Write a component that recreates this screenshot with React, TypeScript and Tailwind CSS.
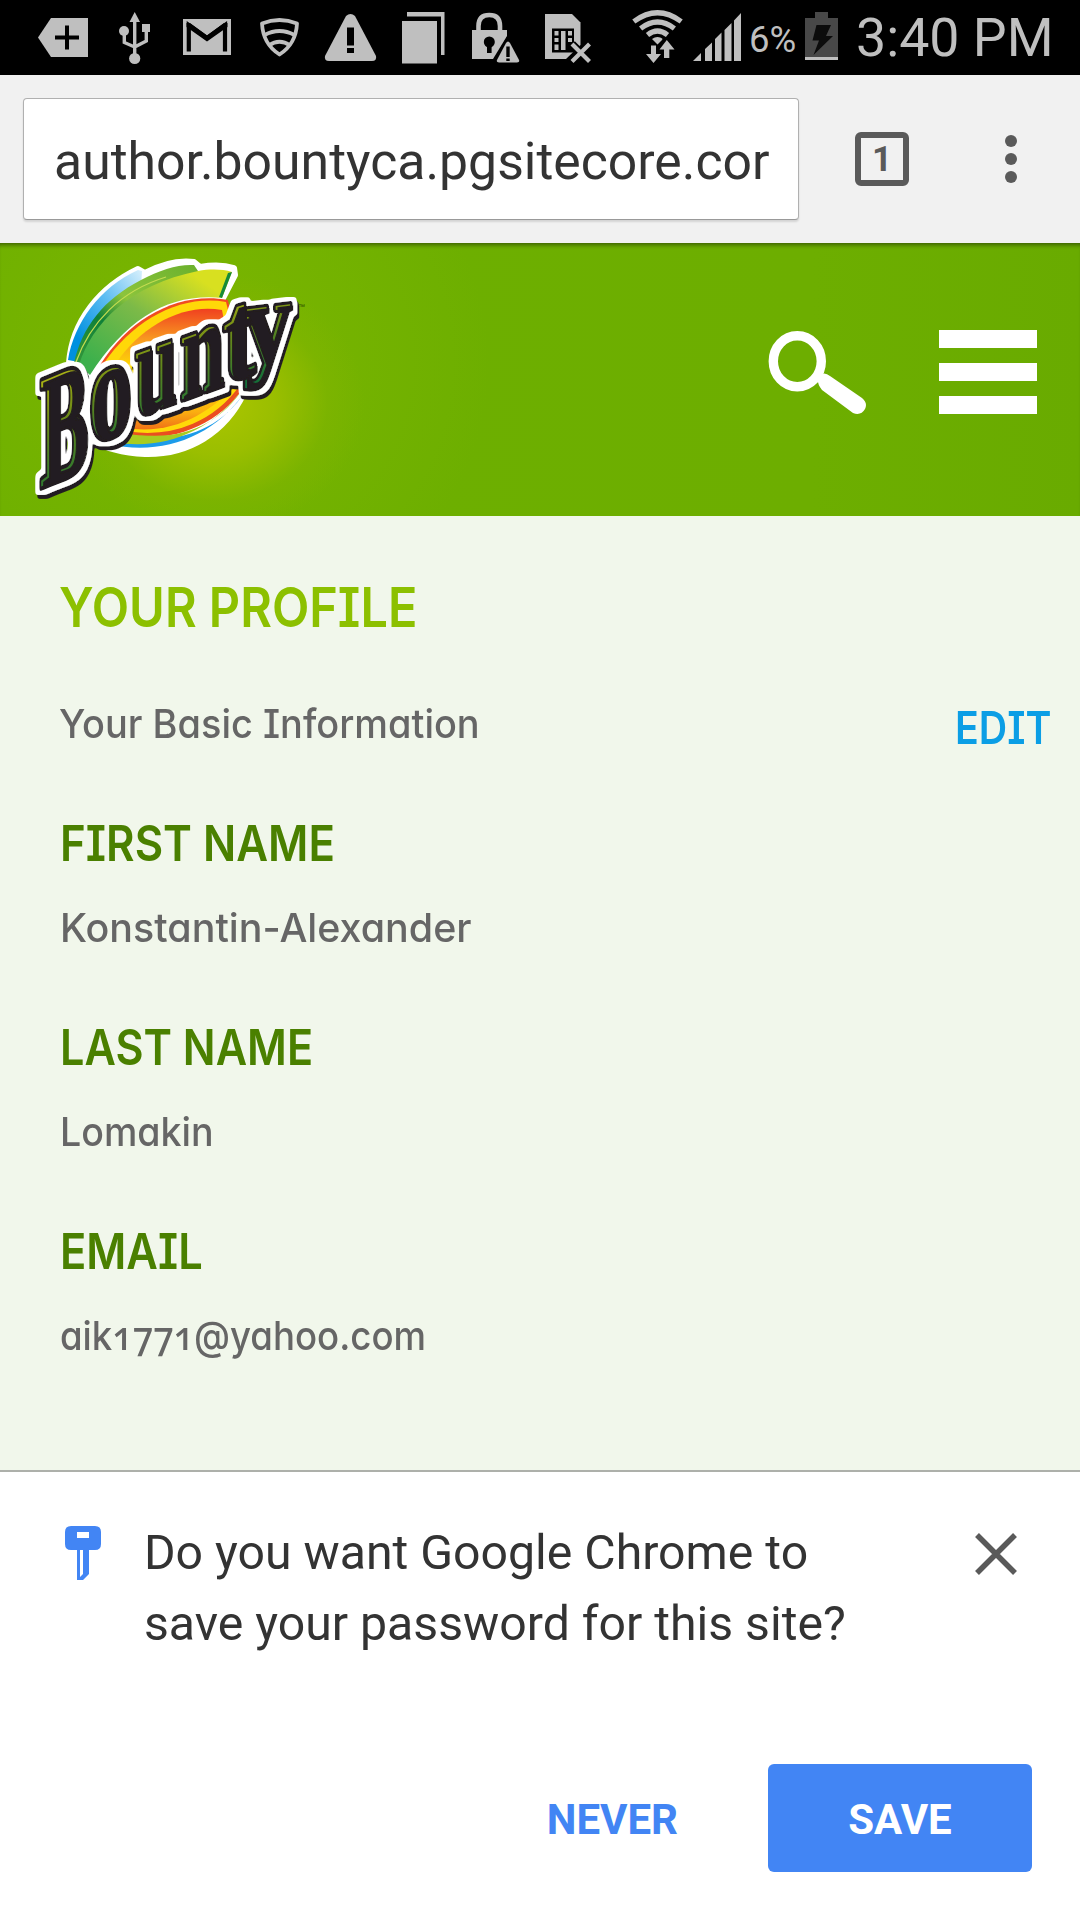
import React, { ReactNode, useLayoutEffect, useRef, useState } from 'react';

/* Text set on one line and condensed horizontally to a given width. */
function FitText({ width, className = '', children }: { width: number; className?: string; children: ReactNode }) {
  const ref = useRef<HTMLSpanElement>(null);
  const [scale, setScale] = useState(1);
  useLayoutEffect(() => {
    if (ref.current) setScale(width / ref.current.offsetWidth);
  }, [width]);
  return (
    <div className={className} style={{ width }}>
      <span ref={ref} className="inline-block origin-left whitespace-nowrap" style={{ transform: `scaleX(${scale})` }}>
        {children}
      </span>
    </div>
  );
}

/* One slot of the status bar; x is where its drawing begins on the bar. */
function Slot({ x, w, className, children }: { x: number; w: number; className: string; children: ReactNode }) {
  return (
    <svg viewBox={`${x} 0 ${w} 75`} className={`h-[75px] shrink-0 ${className}`} fill="#bfbfbf">
      {children}
    </svg>
  );
}

function StatusBar() {
  return (
    <header className="flex h-[75px] bg-black text-[#bfbfbf]">
      <Slot x={0} w={105} className="w-[105px]">
        <path d="M38 37.500 51 18H88V57H51Z" />
        <path d="M67 25.500V49.500M55 37.500H79" stroke="#000" strokeWidth="4" />
      </Slot>
      <Slot x={105} w={60} className="w-[60px]">
        <path d="M134.700 12 140 22H129.500Z" />
        <circle cx="124" cy="31" r="5" />
        <rect x="142" y="24" width="8" height="8" />
        <circle cx="134.700" cy="58.500" r="5.600" />
        <path d="M134.700 20V56M124.300 33V42.500L134.700 47M146.300 30V41L134.700 47" fill="none" stroke="#bfbfbf" strokeWidth="3.400" />
      </Slot>
      <Slot x={165} w={80} className="w-[80px]">
        <rect x="183" y="19" width="48" height="36" />
        <path d="M188.800 51.500V25L207 38L225 25V51.500" fill="none" stroke="#000" strokeWidth="4.200" />
        <path d="M186.500 23H190L207 35.500L224 23H227.500V27L207 41.500L186.500 27Z" fill="#000" />
      </Slot>
      <Slot x={245} w={67} className="w-[67px]">
        <g fill="none" stroke="#bfbfbf" strokeWidth="3.800" strokeLinejoin="round">
          <path d="M262 23.500Q279.500 16.500 297 23.500Q296 44 279.500 54.500Q263 44 262 23.500Z" />
          <path d="M264.500 35Q279.500 27 294.500 35M269 45.500Q279.500 38 290 45.500" />
        </g>
      </Slot>
      <Slot x={312} w={78} className="w-[78px]">
        <path d="M346 16Q350.500 12 355 16L376 56Q377 61 372 61H329Q324 61 325 56Z" />
        <path d="M347 27.500H354V45.500H347ZM347 48H354V53H347Z" fill="#000" />
      </Slot>
      <Slot x={390} w={68} className="w-[68px]">
        <rect x="402" y="21" width="35" height="42.500" />
        <path d="M407 12H444.500V55H441V16.500H407Z" />
      </Slot>
      <Slot x={458} w={72} className="w-[72px]">
        <path d="M472 30H507V36L493 59H472Z" />
        <path d="M478.500 31V26Q478.500 15 489.300 15Q500 15 500 26V31" fill="none" stroke="#bfbfbf" strokeWidth="4.600" />
        <circle cx="489.300" cy="42" r="5.500" fill="#000" />
        <rect x="487" y="43" width="4.600" height="10" fill="#000" />
        <path d="M508 39 521 63H494Z" stroke="#000" strokeWidth="4" />
        <path d="M506 43Q508 40 510 43L519 60Q520 62.500 517 62.500H499Q496 62.500 497 60Z" />
        <path d="M506.300 46.500H509.700V57H506.300ZM506.300 58.500H509.700V61H506.300Z" fill="#000" />
      </Slot>
      <Slot x={530} w={70} className="w-[70px]">
        <path d="M545 14H572L580.500 22.500V45L566 59H545Z" />
        <rect x="552" y="28.500" width="22" height="24" fill="#000" />
        <path d="M554.500 31H558.500V35.500H554.500ZM554.500 38H558.500V42H554.500ZM554.500 44.500H558.500V50H554.500ZM561 31H565.500V50H561ZM568 31H572V35.500H568ZM568 38H572V42H568Z" />
        <path d="M572 44 589.500 61.500M589.500 44 572 61.500" stroke="#000" strokeWidth="8" />
        <path d="M572 44 589.500 61.500M589.500 44 572 61.500" stroke="#bfbfbf" strokeWidth="4.200" />
      </Slot>
      <Slot x={600} w={90} className="w-[90px]">
        <g fill="none" stroke="#bfbfbf" strokeWidth="5.200">
          <path d="M633.800 21.500Q657.500 4 681.200 21.500" />
          <path d="M640.600 28.500Q657.500 15.500 674.400 28.500" />
          <path d="M647.500 35Q657.500 27 667.500 35" />
        </g>
        <path d="M652 39Q657.500 35 663 39L657.500 44.500Z" />
        <path d="M666.500 38V60" stroke="#000" strokeWidth="8" />
        <path d="M651 45.500H656V54H661L653.500 63L646 54H651ZM664 58H669.300V49.500H674.500L666.800 40L659.500 49.500H664Z" />
      </Slot>
      <Slot x={690} w={59} className="w-[59px]">
        <path d="M693 61 701 53V61ZM705 49 712 42.500V61H705ZM715 39 721.500 32.500V61H715ZM724.500 30 731.500 23V61H724.500ZM734 20.500 741 13V61H734Z" />
      </Slot>
      <span className="w-[48px] pt-[2px] font-[Roboto] text-[36.500px] leading-[75px]">6%</span>
      <Slot x={797} w={59} className="w-[59px]">
        <path d="M805 18H815V12H828V18H838V57H805Z" fill="#484848" />
        <rect x="805" y="57" width="33" height="3" />
        <path d="M816.500 25H831L826 36H833L813.500 55L819 40.500H812.500Z" fill="#0c0c0c" />
      </Slot>
      <span className="whitespace-nowrap font-[Roboto] text-[53.700px] leading-[75px]">3:40 PM</span>
    </header>
  );
}

function BrowserBar() {
  return (
    <div className="flex h-[168px] items-start bg-[#f1f1f1] pl-[23px] pt-[23px]">
      <div className="h-[122px] w-[776px] overflow-hidden rounded-[4px] border border-[#b0b0b0] border-b-[#999] bg-white pl-[30px] pt-[2px] shadow-[0_2px_2px_rgba(0,0,0,0.12)]">
        <FitText width={715} className="font-[Roboto] text-[52px] leading-[122px] text-[#333]">
          author.bountyca.pgsitecore.cor
        </FitText>
      </div>
      <div className="ml-[56px] mt-[34px] flex h-[54px] w-[54px] items-center justify-center rounded-[6px] border-[6px] border-[#5a5a5a] font-[Roboto] text-[35px] font-bold leading-none text-[#5a5a5a]">
        1
      </div>
      <div className="ml-[96px] mt-[37px] flex flex-col gap-[6px]">
        <i className="size-3 rounded-full bg-[#5a5a5a]" />
        <i className="size-3 rounded-full bg-[#5a5a5a]" />
        <i className="size-3 rounded-full bg-[#5a5a5a]" />
      </div>
    </div>
  );
}

type Letter = { ch: string; x: number; y: number; sx: number; sy: number; slope: number };
const letters: Letter[] = [
  { ch: 'B', x: 40, y: 244, sx: 0.71, sy: 1.6, slope: -0.42 },
  { ch: 'o', x: 89, y: 200, sx: 0.84, sy: 1.42, slope: -0.34 },
  { ch: 'u', x: 135, y: 173, sx: 0.74, sy: 1.34, slope: -0.36 },
  { ch: 'n', x: 180, y: 157, sx: 0.78, sy: 1.32, slope: -0.36 },
  { ch: 't', x: 223, y: 139, sx: 0.96, sy: 1.26, slope: -0.3 },
  { ch: 'y', x: 243, y: 121, sx: 0.96, sy: 1.18, slope: -0.12 },
];

function Wordmark() {
  return (
    <>
      {letters.map((l) => (
        <text
          key={l.ch}
          transform={`matrix(${l.sx} ${l.slope * l.sx} 0 ${l.sy} ${l.x} ${l.y})`}
          fontFamily="Liberation Serif, serif"
          fontWeight="700"
          fontSize="100"
        >
          {l.ch}
        </text>
      ))}
    </>
  );
}

function BountyLogo() {
  return (
    <svg viewBox="0 0 340 273" className="h-[273px] w-[340px] overflow-visible" role="img" aria-label="Bounty">
      <defs>
        <linearGradient id="blue" x1="0" y1="1" x2="1" y2="0">
          <stop offset="0.200" stopColor="#0090e0" />
          <stop offset="0.600" stopColor="#5cbcf2" />
          <stop offset="1" stopColor="#d8f0fc" />
        </linearGradient>
        <linearGradient id="dark" x1="0" y1="1" x2="1" y2="0">
          <stop offset="0" stopColor="#3a9a3c" />
          <stop offset="0.350" stopColor="#0f8038" />
          <stop offset="0.550" stopColor="#8cc43c" />
          <stop offset="1" stopColor="#6ab02c" />
        </linearGradient>
        <linearGradient id="leaf" x1="0" y1="1" x2="1" y2="0">
          <stop offset="0.100" stopColor="#3cb04c" />
          <stop offset="0.500" stopColor="#7cba48" />
          <stop offset="0.850" stopColor="#d8e020" />
        </linearGradient>
        <linearGradient id="sun" x1="0" y1="0" x2="0" y2="1">
          <stop offset="0" stopColor="#f04020" />
          <stop offset="0.250" stopColor="#f89820" />
          <stop offset="0.500" stopColor="#ffe000" />
          <stop offset="0.850" stopColor="#fbb010" />
          <stop offset="1" stopColor="#f07018" />
        </linearGradient>
        <linearGradient id="edge" x1="0" y1="0" x2="0" y2="1">
          <stop offset="0" stopColor="#d8d010" />
          <stop offset="0.450" stopColor="#708c18" />
          <stop offset="1" stopColor="#0c6c3c" />
        </linearGradient>
        <filter id="outline" x="-10%" y="-10%" width="120%" height="120%">
          <feMorphology in="SourceAlpha" operator="dilate" radius="4" result="fat" />
          <feGaussianBlur in="fat" stdDeviation="1.200" result="soft" />
          <feComponentTransfer in="soft" result="crisp">
            <feFuncA type="linear" slope="3" intercept="-1" />
          </feComponentTransfer>
          <feOffset in="crisp" dx="2" dy="4" result="low" />
          <feFlood floodColor="#231f20" />
          <feComposite in2="low" operator="in" result="shadow" />
          <feFlood floodColor="#fff" />
          <feComposite in2="crisp" operator="in" result="white" />
          <feMerge>
            <feMergeNode in="shadow" />
            <feMergeNode in="white" />
            <feMergeNode in="SourceGraphic" />
          </feMerge>
        </filter>
      </defs>

      <path
        d="M69 120C72 78 100 44 138 26L145 30C160 22 178 17 194 19L200 24C212 22 224 22 234 25L235 32L222 57L250 100L244 150C225 190 188 212 145 211C122 210 106 206 92 197Z"
        fill="#fff"
        stroke="#fff"
        strokeWidth="6"
        strokeLinejoin="round"
      />
      <path d="M68 117C74 80 100 44 138 27L142 28L141 44C110 56 90 84 84 120Z" fill="url(#blue)" />
      <path d="M74 120C82 84 104 56 141 37C160 27 178 21 194 22L198 28L200 40C150 50 104 80 92 128Z" fill="url(#dark)" />
      <path d="M79 122C92 80 130 42 198 28C210 26 222 26 232 29L222 55C170 50 128 74 90 132Z" fill="url(#leaf)" />
      <path d="M76 119C90 80 120 48 166 34" fill="none" stroke="#c4dc50" strokeWidth="1.300" />
      <path d="M232 29 222 55 219 54 228 30Z" fill="#158a3a" />
      <path d="M100 122C130 74 180 48 228 57L246 140C226 176 180 200 128 194Z" fill="#f04c20" />
      <path d="M104 120C134 76 182 51 226 59L246 138C224 172 180 196 130 190Z" fill="#ffd808" />
      <path d="M116 120C142 82 184 60 222 67L236 140C214 168 176 190 134 186Z" fill="url(#sun)" />
      <path d="M245 149C220 186 182 202 128 193L122 194L108 201C160 213 212 196 245 149Z" fill="#1c9bea" />
      <path d="M244 144C220 182 180 200 128 190L114 199C160 208 212 190 244 144Z" fill="#a8cc20" />
      <path d="M241 143C216 178 176 196 130 190" fill="none" stroke="#e85020" strokeWidth="2.500" />

      <g filter="url(#outline)">
        <g fill="#231f20" stroke="#231f20" strokeWidth="5.500" strokeLinejoin="round">
          <Wordmark />
        </g>
        <g fill="url(#edge)">
          <Wordmark />
        </g>
        <g fill="#231f20" stroke="#231f20" strokeWidth="1.500" transform="translate(2.500 2)">
          <Wordmark />
        </g>
      </g>
      <text x="298" y="66" fontFamily="Liberation Sans, sans-serif" fontSize="7" fill="#2c5000">
        ™
      </text>
    </svg>
  );
}

function SiteHeader() {
  return (
    <div className="flex h-[273px] items-start bg-[#6dae00] bg-[radial-gradient(ellipse_150px_130px_at_215px_160px,#acc600_0%,rgba(160,192,0,0.85)_40%,rgba(135,182,0,0.35)_75%,rgba(115,176,0,0)_100%),radial-gradient(ellipse_300px_280px_at_190px_120px,#7cb500_0%,rgba(120,180,0,0.7)_50%,rgba(109,174,0,0)_100%),linear-gradient(90deg,#6db000_0%,#6dae00_75%,#69ab00_100%)] shadow-[inset_0_5px_4px_-3px_rgba(0,0,0,0.45)]">
      <BountyLogo />
      <svg viewBox="766 328 100 90" className="ml-[426px] mt-[85px] h-[90px] w-[100px]">
        <ellipse cx="797.300" cy="361.300" rx="24" ry="25.500" fill="none" stroke="#fff" strokeWidth="9.400" />
        <path d="M818.500 376Q824 371 830 376L862 398Q868 403 865 409Q861 416 853 413L822 390Q816 383 818.500 376Z" fill="#fff" />
      </svg>
      <div className="ml-[73px] mt-[87px] flex w-[98px] flex-col gap-[15px]">
        <i className="h-[18px] bg-white" />
        <i className="h-[18px] bg-white" />
        <i className="h-[18px] bg-white" />
      </div>
    </div>
  );
}

function Field({ label, labelWidth, width, children }: { label: string; labelWidth: number; width: number; children: ReactNode }) {
  return (
    <div className="h-[204px]">
      <FitText width={labelWidth} className="h-[60px] text-[49.500px] font-[570] leading-[60px] text-[#4a8000]">
        {label}
      </FitText>
      <FitText width={width} className="mt-[31px] h-[48px] text-[40px] leading-[47px] text-[#666]">
        {children}
      </FitText>
    </div>
  );
}

function Profile() {
  return (
    <main className="h-[954px] bg-[#f1f7eb] pl-[60px] pr-[29px] pt-[61px] font-[Inter] font-medium [font-feature-settings:'cv08','cv11']">
      <FitText width={358} className="-ml-px h-[60px] text-[55px] font-[570] leading-[60px] text-[#8cc000]">
        YOUR PROFILE
      </FitText>
      <div className="-ml-px mt-[63px] flex h-[52px] items-start justify-between">
        <FitText width={421} className="h-[48px] text-[40px] leading-[47px] text-[#666]">
          Your Basic Information
        </FitText>
        <FitText width={96} className="mt-1 h-[48px] text-[45px] font-[570] leading-[48px] text-[#0b9ee5]">
          EDIT
        </FitText>
      </div>
      <div className="mt-[61px]">
        <Field label="FIRST NAME" labelWidth={275} width={412}>
          Konstantin-Alexander
        </Field>
        <Field label="LAST NAME" labelWidth={253} width={154}>
          Lomakin
        </Field>
        <Field label="EMAIL" labelWidth={143} width={366}>
          aik<span className="font-['Noto_Sans'] leading-none [font-feature-settings:'onum']">1771</span>@yahoo.com
        </Field>
      </div>
    </main>
  );
}

function SavePassword() {
  return (
    <section className="h-[450px] border-t-2 border-[#adb0aa] bg-white font-[Roboto]">
      <div className="flex h-[292px] items-start pl-[65px] pt-[45px]">
        <svg viewBox="0 0 36 54" className="mt-[9px] h-[54px] w-[36px]" fill="#4285f4">
          <path fillRule="evenodd" d="M6 0H30Q36 0 36 6V18Q36 24 30 24H6Q0 24 0 18V6Q0 0 6 0ZM12 6V12H24V6Z" />
          <path fillRule="evenodd" d="M12 24H24V48L18 54H12ZM15 24V51L18 48V24Z" />
        </svg>
        <p className="ml-[43px] w-[760px] text-[48.200px] leading-[71px] text-[#333]">
          Do you want Google Chrome to
          <br />
          save your password for this site?
        </p>
        <svg viewBox="0 0 42 42" className="ml-[71px] mt-[16px] h-[42px] w-[42px]">
          <path d="M2 2 40 40M40 2 2 40" stroke="#5a5a5a" strokeWidth="5.500" />
        </svg>
      </div>
      <div className="flex h-[108px] justify-end pr-[48px] text-[42px] font-bold">
        <button className="mr-[90px] pt-[3px] leading-[105px] text-[#4285f4]">NEVER</button>
        <button className="w-[264px] rounded-[6px] bg-[#4285f4] pt-[3px] leading-[105px] text-white">SAVE</button>
      </div>
    </section>
  );
}

export default function App() {
  return (
    <div className="h-[1920px] w-[1080px] overflow-hidden bg-white">
      <StatusBar />
      <BrowserBar />
      <SiteHeader />
      <Profile />
      <SavePassword />
    </div>
  );
}
